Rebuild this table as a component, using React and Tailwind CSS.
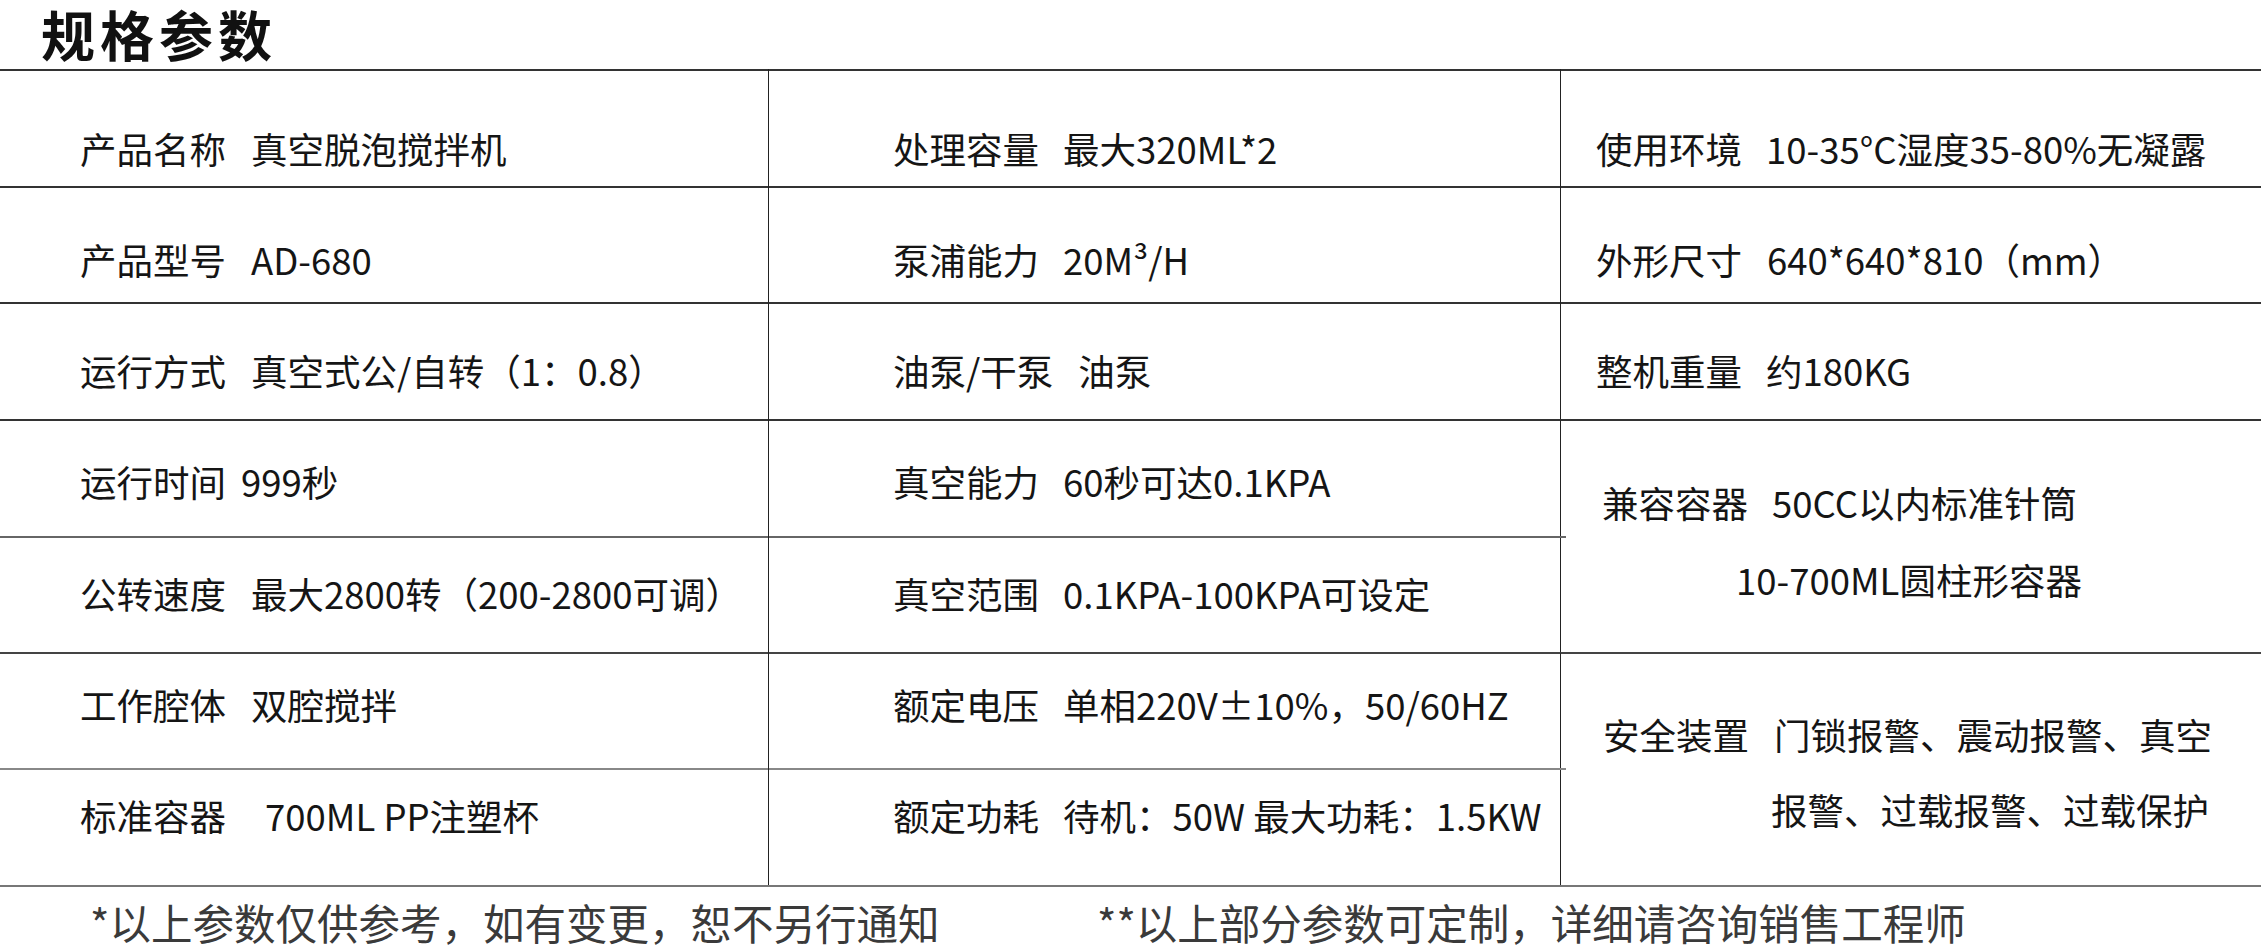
import React from 'react'

const FONT = "font-[family-name:'Noto_Sans_CJK_SC','Noto_Sans',sans-serif]"

// padding-top per table row so the text sits where the reference has it
const ROW_H = ['h-[117px]', 'h-[116px]', 'h-[117px]', 'h-[117px]', 'h-[116px]', 'h-[116px]', 'h-[117px]']
const ROW_PT = ['pt-[60px]', 'pt-[54px]', 'pt-[49px]', 'pt-[43px]', 'pt-[38px]', 'pt-[33px]', 'pt-[28px]']
const ROW_START = ['row-start-1', 'row-start-2', 'row-start-3', 'row-start-4', 'row-start-5', 'row-start-6', 'row-start-7']
const ROW_LINE = ['border-[#333]', 'border-[#333]', 'border-[#333]', 'border-[#333]', 'border-[#666]', 'border-[#444]', 'border-[#888]']

const col1 = [
  ['产品名称', '真空脱泡搅拌机', 'ml-[25px]'],
  ['产品型号', 'AD-680', 'ml-[25px]'],
  ['运行方式', '真空式公/自转（1：0.8）', 'ml-[25px]'],
  ['运行时间', '999秒', 'ml-[15px]'],
  ['公转速度', '最大2800转（200-2800可调）', 'ml-[25px]'],
  ['工作腔体', '双腔搅拌', 'ml-[25px]'],
  ['标准容器', '700ML PP注塑杯', 'ml-[39px]'],
]

const col2 = [
  ['处理容量', '最大320ML*2', 'ml-[24px]'],
  ['泵浦能力', '20M³/H', 'ml-[24px]'],
  ['油泵/干泵', '油泵', 'ml-[25px]'],
  ['真空能力', '60秒可达0.1KPA', 'ml-[24px]'],
  ['真空范围', '0.1KPA-100KPA可设定', 'ml-[24px]'],
  ['额定电压', '单相220V±10%，50/60HZ', 'ml-[24px]'],
  ['额定功耗', '待机：50W 最大功耗：1.5KW', 'ml-[24px]'],
]

const col3 = [
  ['使用环境', '10-35°C湿度35-80%无凝露', 'ml-[24px]'],
  ['外形尺寸', '640*640*810（mm）', 'ml-[25px]'],
  ['整机重量', '约180KG', 'ml-[24px]'],
]

function Cell({ row, label, value, vml, pl, stub }) {
  return (
    <div className={`${ROW_H[row]} ${ROW_PT[row]} ${pl} relative border-t-2 ${ROW_LINE[row]} whitespace-nowrap`}>
      <div className="flex leading-[35px]">
        <span>{label}</span>
        <span className={vml}>{value}</span>
      </div>
      {stub && <span className={`absolute -right-[6px] -top-[2px] h-[2px] w-[6px] ${stub}`} />}
    </div>
  )
}

export default function App() {
  return (
    <div className={`${FONT} h-[952px] w-[2261px] overflow-hidden bg-white text-[#151515]`}>
      <div className="h-[69px] pl-[41px] pt-[3px]">
        <h1 className="text-[54px] font-bold leading-[62px] tracking-[5px] text-[#111]">规格参数</h1>
      </div>

      <div className="grid grid-cols-[768px_792px_701px] border-b-2 border-[#777] text-[36.5px]">
        {col1.map(([l, v, ml], i) => (
          <div key={l} className={`${ROW_START[i]} col-start-1`}>
            <Cell row={i} label={l} value={v} vml={ml} pl="pl-[80px]" />
          </div>
        ))}
        {col2.map(([l, v, ml], i) => (
          <div key={l} className={`${ROW_START[i]} col-start-2 border-l border-[#222]`}>
            <Cell
              row={i}
              label={l}
              value={v}
              vml={ml}
              pl="pl-[124px]"
              stub={i === 4 ? 'bg-[#666]' : i === 6 ? 'bg-[#888]' : null}
            />
          </div>
        ))}
        {col3.map(([l, v, ml], i) => (
          <div key={l} className={`${ROW_START[i]} col-start-3 border-l border-[#222]`}>
            <Cell row={i} label={l} value={v} vml={ml} pl="pl-[35px]" />
          </div>
        ))}

        <div className="col-start-3 row-start-4 row-span-2 border-l border-t-2 border-l-[#222] border-t-[#333] pl-[41px] pt-[64px] leading-[35px] whitespace-nowrap">
          <div className="flex">
            <span>兼容容器</span>
            <span className="ml-[24px]">50CC以内标准针筒</span>
          </div>
          <div className="mt-[42px] ml-[134px]">10-700ML圆柱形容器</div>
        </div>

        <div className="col-start-3 row-start-6 row-span-2 border-l border-t-2 border-l-[#222] border-t-[#444] pl-[42px] pt-[63px] leading-[35px] whitespace-nowrap">
          <div className="flex">
            <span>安全装置</span>
            <span className="ml-[25px]">门锁报警、震动报警、真空</span>
          </div>
          <div className="mt-[40px] ml-[168px]">报警、过载报警、过载保护</div>
        </div>
      </div>

      <div className="flex pt-[14px] text-[41.5px] leading-[42px] text-[#3a3a3a] whitespace-nowrap">
        <span className="w-[1097px] shrink-0 pl-[90px]">*以上参数仅供参考，如有变更，恕不另行通知</span>
        <span>**以上部分参数可定制，详细请咨询销售工程师</span>
      </div>
    </div>
  )
}
